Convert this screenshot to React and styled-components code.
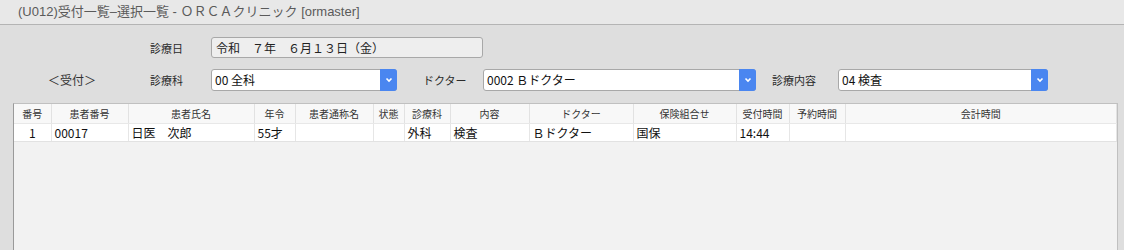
import styled, { createGlobalStyle } from "styled-components";

const GlobalStyle = createGlobalStyle`
  body {
    margin: 0;
    background: #dedede;
    font-family: "Noto Sans CJK JP", "Noto Sans", sans-serif;
    color: #222;
  }
`;

const columns = [
    { name: "番号", width: 37, align: "center" },
    { name: "患者番号", width: 77 },
    { name: "患者氏名", width: 126 },
    { name: "年令", width: 41 },
    { name: "患者通称名", width: 78 },
    { name: "状態", width: 31 },
    { name: "診療科", width: 46 },
    { name: "内容", width: 79 },
    { name: "ドクター", width: 104 },
    { name: "保険組合せ", width: 103 },
    { name: "受付時間", width: 53 },
    { name: "予約時間", width: 56 },
    { name: "会計時間" },
];

const rows = [
    ["1", "00017", "日医　次郎", "55才", "", "", "外科", "検査", "Ｂドクター", "国保", "14:44", "", ""],
];

const Chevron = () => (
    <svg width="8" height="6" viewBox="0 0 8 6">
        <path d="M1.5 1.5 L4 4 L6.5 1.5" fill="none" stroke="#fff" strokeWidth="1.6" />
    </svg>
);

const Select = ({ value, width }) => (
    <SelectBox $width={width}>
        <SelectValue>{value}</SelectValue>
        <SelectButton><Chevron /></SelectButton>
    </SelectBox>
);

const App = () => {
    return(
        <Window>
            <GlobalStyle />
            <TitleBar>(U012)受付一覧–選択一覧 - ＯＲＣＡクリニック [ormaster]</TitleBar>
            <Form>
                <FormRow $indent={150}>
                    <Label $width={61}>診療日</Label>
                    <DateField>令和　７年　６月１３日（金）</DateField>
                </FormRow>
                <FormRow $indent={48}>
                    <Section>＜受付＞</Section>
                    <Label $width={61}>診療科</Label>
                    <Select value="00 全科" width={186} />
                    <Label $width={60} $gap={26}>ドクター</Label>
                    <Select value="0002 Ｂドクター" width={273} />
                    <Label $width={66} $gap={16}>診療内容</Label>
                    <Select value="04 検査" width={210} />
                </FormRow>
            </Form>
            <ListPanel>
                <Table>
                    <colgroup>
                        {columns.map((c) => (
                            <col key={c.name} style={c.width ? { width: c.width } : undefined} />
                        ))}
                    </colgroup>
                    <thead>
                        <tr>
                            {columns.map((c) => <Th key={c.name}>{c.name}</Th>)}
                        </tr>
                    </thead>
                    <tbody>
                        {rows.map((r, i) => (
                            <tr key={i}>
                                {r.map((v, j) => (
                                    <Td key={j} $align={columns[j].align}>{v}</Td>
                                ))}
                            </tr>
                        ))}
                    </tbody>
                </Table>
            </ListPanel>
        </Window>
    );
}

const Window = styled.div`
    width: 1124px;
    height: 250px;
    overflow: hidden;
    background: #dedede;
`;

const TitleBar = styled.div`
    height: 25px;
    box-sizing: border-box;
    padding-left: 18px;
    line-height: 24px;
    font-size: 13px;
    color: #5a5a5a;
    background: #e8e8e8;
    border-bottom: 1px solid #b4b4b4;
    font-family: "Liberation Sans", "Noto Sans CJK JP", sans-serif;
`;

const Form = styled.div`
    display: flex;
    flex-direction: column;
    gap: 11px;
    padding-top: 12px;
`;

const FormRow = styled.div`
    display: flex;
    align-items: center;
    height: 21px;
    padding-left: ${(p) => p.$indent}px;
`;

const Section = styled.div`
    width: 102px;
    font-size: 12px;
    color: #333;
`;

const Label = styled.div`
    width: ${(p) => p.$width}px;
    margin-left: ${(p) => p.$gap || 0}px;
    font-size: 11px;
    color: #2a2a2a;
`;

const DateField = styled.div`
    width: 272px;
    height: 21px;
    box-sizing: border-box;
    padding-left: 4px;
    line-height: 19px;
    font-size: 12px;
    color: #222;
    background: #eeeeee;
    border: 1px solid #a8a8a8;
    border-radius: 3px;
`;

const SelectBox = styled.div`
    display: flex;
    width: ${(p) => p.$width}px;
    height: 22px;
    box-sizing: border-box;
    background: #fff;
    border: 1px solid #a8a8a8;
    border-radius: 3px;
`;

const SelectValue = styled.div`
    flex: 1;
    padding-left: 3px;
    line-height: 20px;
    font-size: 12px;
    color: #111;
    overflow: hidden;
`;

const SelectButton = styled.div`
    width: 17px;
    margin: -1px -1px -1px 0;
    display: flex;
    align-items: center;
    justify-content: center;
    background: #4a86f0;
    border-radius: 0 3px 3px 0;
`;

const ListPanel = styled.div`
    margin: 13px 6px 0 13px;
    height: 160px;
    background: #f2f2f2;
    border: 1px solid #c0c0c0;
    border-left-color: #9a9a9a;
`;

const Table = styled.table`
    width: 100%;
    table-layout: fixed;
    border-collapse: collapse;
`;

const Th = styled.th`
    height: 19px;
    padding: 0;
    font-size: 10px;
    font-weight: normal;
    color: #333;
    background: #f8f8f8;
    border-right: 1px solid #e2e2e2;
    border-bottom: 1px solid #e8e8e8;
    white-space: nowrap;
    overflow: hidden;
`;

const Td = styled.td`
    height: 16px;
    padding: 0 3px;
    font-size: 12px;
    color: #111;
    background: #fff;
    text-align: ${(p) => p.$align || "left"};
    border-right: 1px solid #e6e6e6;
    border-bottom: 1px solid #e2e2e2;
    white-space: nowrap;
    overflow: hidden;
`;

export default App;
